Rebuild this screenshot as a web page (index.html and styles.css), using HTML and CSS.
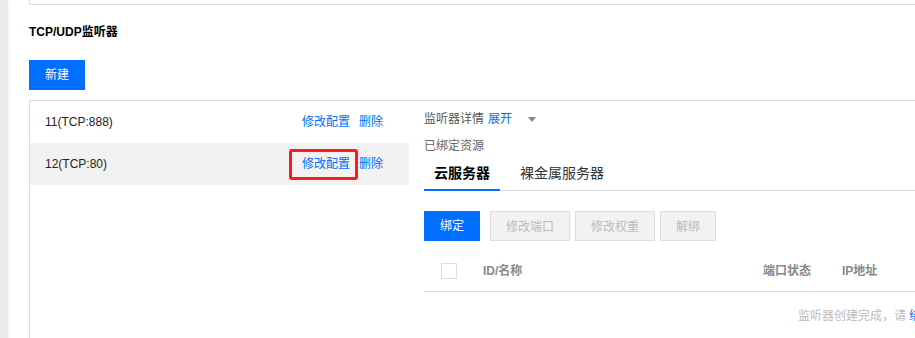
FILE: index.html
```html
<!DOCTYPE html>
<html lang="zh-CN">
<head>
    <meta charset="UTF-8">
    <meta name="viewport" content="width=device-width, initial-scale=1.0">
    <title>TCP/UDP监听器</title>
    <link rel="stylesheet" href="styles.css">
</head>
<body>
    <div class="layout">
        <div class="side-strip"></div>

        <div class="main">
            <div class="top-box"></div>

            <h2 class="section-title">TCP/UDP监听器</h2>
            <button class="btn btn-primary">新建</button>

            <div class="listener-box">
                <ul class="listener-list">
                    <li class="listener-item">
                        <span class="listener-name">11(TCP:888)</span>
                        <span class="actions">
                            <a class="link">修改配置</a>
                            <a class="link">删除</a>
                        </span>
                    </li>
                    <li class="listener-item active">
                        <span class="listener-name">12(TCP:80)</span>
                        <span class="actions">
                            <a class="link marked">修改配置<span class="annotate"></span></a>
                            <a class="link">删除</a>
                        </span>
                    </li>
                </ul>

                <div class="detail">
                    <div class="detail-head">
                        监听器详情 <a class="link">展开</a>
                        <span class="caret"></span>
                    </div>
                    <div class="detail-label">已绑定资源</div>

                    <div class="tabs">
                        <span class="tab current">云服务器</span>
                        <span class="tab">裸金属服务器</span>
                    </div>

                    <div class="toolbar">
                        <button class="btn btn-primary">绑定</button>
                        <button class="btn btn-disabled">修改端口</button>
                        <button class="btn btn-disabled">修改权重</button>
                        <button class="btn btn-disabled">解绑</button>
                    </div>

                    <div class="table">
                        <div class="table-head">
                            <span class="cell cell-check"><span class="checkbox"></span></span>
                            <span class="cell cell-id">ID/名称</span>
                            <span class="cell cell-port">端口状态</span>
                            <span class="cell cell-ip">IP地址</span>
                        </div>
                        <div class="table-empty">
                            监听器创建完成，请 <a class="link">绑定云服务器</a>
                        </div>
                    </div>
                </div>
            </div>
        </div>
    </div>
</body>
</html>
```

FILE: styles.css
```css
:root {
    --blue: #006eff;
    --line: #dddddd;
    --muted: #bbbbbb;
}

body {
    margin: 0;
    padding: 0;
    overflow: hidden;
    font-family: 'Liberation Sans', 'Noto Sans CJK SC', sans-serif;
    font-size: 12px;
    line-height: 18px;
    color: #222;
    background: #fff;
}

.layout {
    display: flex;
    width: 1200px;
    min-height: 338px;
}

.side-strip {
    width: 8px;
    flex-shrink: 0;
    background: #ebebeb;
    box-shadow: 1px 0 3px rgba(0, 0, 0, 0.06);
}

.main {
    flex: 1;
    padding-left: 21px;
}

.top-box {
    height: 4px;
    border-left: 1px solid var(--line);
    border-bottom: 1px solid var(--line);
}

.section-title {
    margin: 18px 0 19px;
    font-size: 12px;
    line-height: 18px;
    font-weight: bold;
    color: #000;
}

.btn {
    height: 30px;
    padding: 0 16px;
    border: none;
    font-family: inherit;
    font-size: 12px;
    line-height: 30px;
    cursor: pointer;
}

.btn-primary {
    background: var(--blue);
    color: #fff;
}

.btn-disabled {
    padding: 0 15px;
    background: #f2f2f2;
    border: 1px solid var(--line);
    color: var(--muted);
    cursor: default;
}

.listener-box {
    display: flex;
    margin-top: 10px;
    min-height: 260px;
    border-top: 1px solid var(--line);
    border-left: 1px solid var(--line);
}

.listener-list {
    width: 379px;
    margin: 0;
    padding: 0;
    list-style: none;
}

.listener-item {
    display: flex;
    justify-content: space-between;
    align-items: center;
    height: 42px;
    padding: 0 26px 0 15px;
}

.listener-item.active {
    background: #f2f2f2;
}

.actions {
    display: flex;
    gap: 9px;
}

.link {
    color: var(--blue);
    cursor: pointer;
}

.marked {
    position: relative;
}

.annotate {
    position: absolute;
    left: -13px;
    right: -8px;
    top: -6px;
    bottom: -7px;
    border: 3px solid #ff1a1a;
    border-radius: 3px;
}

.detail {
    flex: 1;
    padding: 9px 0 0 15px;
}

.detail-head {
    display: flex;
    align-items: center;
    gap: 4px;
    color: #555;
}

.caret {
    width: 0;
    height: 0;
    margin-left: 12px;
    border-left: 4px solid transparent;
    border-right: 4px solid transparent;
    border-top: 5px solid #888;
}

.detail-label {
    margin-top: 9px;
    color: #666;
}

.tabs {
    display: flex;
    margin-top: 8px;
    border-bottom: 1px solid var(--line);
}

.tab {
    margin-right: 10px;
    margin-bottom: -1px;
    padding: 0 10px 6px;
    font-size: 14px;
    line-height: 20px;
    color: #333;
    border-bottom: 2px solid transparent;
}

.tab.current {
    font-weight: bold;
    color: #000;
    border-bottom-color: var(--blue);
}

.toolbar {
    display: flex;
    gap: 5px;
    margin-top: 20px;
}

.toolbar .btn-primary {
    margin-right: 5px;
}

.table {
    margin-top: 10px;
}

.table-head {
    display: grid;
    grid-template-columns: 59px 280px 79px 1fr;
    align-items: center;
    height: 40px;
    border-bottom: 1px solid var(--line);
    font-weight: bold;
    color: #888;
}

.cell-check {
    display: flex;
    padding-left: 17px;
}

.checkbox {
    width: 14px;
    height: 14px;
    border: 1px solid var(--line);
    background: #fff;
}

.table-empty {
    padding: 15px 0 0 374px;
    white-space: nowrap;
    color: var(--muted);
}
```
